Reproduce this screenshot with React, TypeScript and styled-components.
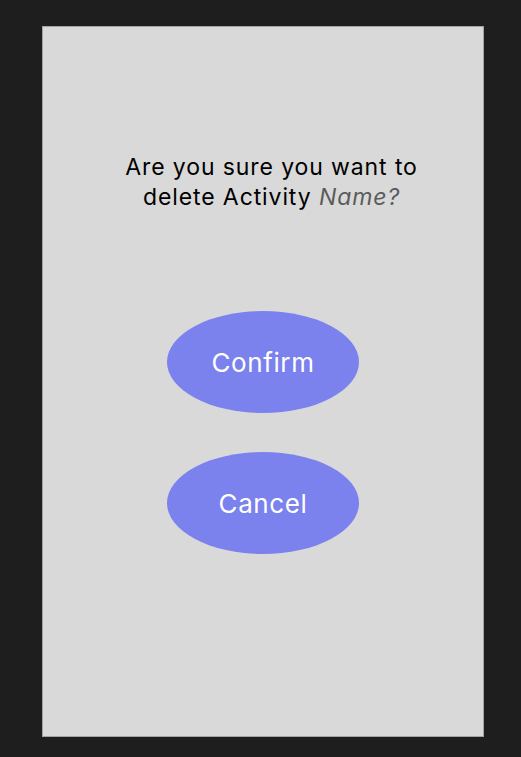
import React from "react";
import styled, { createGlobalStyle } from "styled-components";

const Global = createGlobalStyle`
  html, body { margin: 0; padding: 0; background: #1e1e1e; }
  body { font-family: Inter, "Noto Sans", sans-serif; }
`;

const Page = styled.div`
  min-height: 757px;
  padding: 26px 0 0 42px;
  box-sizing: border-box;
`;

const Panel = styled.div`
  width: 442px;
  height: 711px;
  box-sizing: border-box;
  background: #d9d9d9;
  border: 1px solid #a3a3a3;
  display: flex;
  flex-direction: column;
  align-items: center;
  padding-top: 125px;
`;

const Question = styled.p`
  margin: 0 0 0 17px;
  font-size: 23px;
  line-height: 30px;
  letter-spacing: 0.9px;
  color: #000;
  text-align: center;
`;

const Name = styled.em`
  color: #5b5b5b;
  font-style: italic;
`;

const Buttons = styled.div`
  margin-top: 99px;
  display: flex;
  flex-direction: column;
  align-items: center;
  gap: 39px;
`;

const Oval = styled.button`
  width: 192px;
  height: 102px;
  border-radius: 50%;
  border: none;
  background: #7b82ee;
  color: #fff;
  font-family: Inter, "Noto Sans", sans-serif;
  font-size: 26px;
  letter-spacing: 0.6px;
  padding: 0;
  cursor: pointer;
`;

export default function App() {
  return (
    <Page>
      <Global />
      <Panel>
        <Question>
          Are you sure you want to
          <br />
          delete Activity <Name>Name?</Name>
        </Question>
        <Buttons>
          <Oval>Confirm</Oval>
          <Oval>Cancel</Oval>
        </Buttons>
      </Panel>
    </Page>
  );
}
